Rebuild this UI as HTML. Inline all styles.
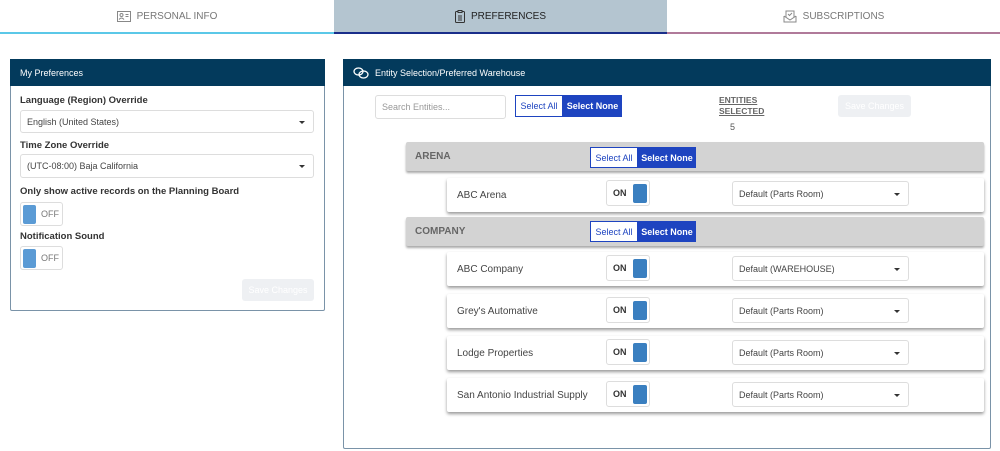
<!DOCTYPE html>
<html><head><style>
*{box-sizing:border-box;margin:0;padding:0}
body{width:1000px;height:451px;background:#fff;font-family:"Liberation Sans",sans-serif;position:relative;overflow:hidden;color:#333}
.a{position:absolute}
.tab{top:0;height:32px;font-size:10px;color:#777;display:flex;align-items:center;justify-content:center;gap:6px}
.hd{background:#033a5c;color:#fff;font-size:9px;display:flex;align-items:center;padding-left:10px}
.panel{border:1px solid #7a93a8;border-radius:2px}
.lbl{font-size:9.5px;font-weight:bold;color:#333}
.sel{border:1px solid #ddd;border-radius:3px;background:#fff;font-size:9px;color:#444;display:flex;align-items:center;padding-left:6px}
.sel:after{content:"";position:absolute;right:8px;top:50%;margin-top:-1px;border:3px solid transparent;border-top:3px solid #333;border-bottom:0}
.tog{border:1px solid #ddd;border-radius:3px;background:#fff;font-size:9px}
.sa{border:1px solid #1e44c0;background:#fff;color:#1e44c0;font-size:9px;display:flex;align-items:center;justify-content:center}
.sn{background:#1e44c0;color:#fff;font-size:9px;font-weight:bold;display:flex;align-items:center;justify-content:center}
.grp{left:406px;width:578px;background:#d3d3d3;font-size:10px;font-weight:bold;color:#666;display:flex;align-items:center;padding-left:9px;box-shadow:0 2px 2px #aaa;border-radius:2px}
.row{left:447px;width:537px;height:34px;background:#fff;box-shadow:0 2px 3px #999;border-radius:2px;font-size:10px;color:#444;display:flex;align-items:center;padding-left:10px}
.knob{position:absolute;background:#3a7fc0;border-radius:2px}
.save{background:#eef0f3;color:#fff;font-size:9px;display:flex;align-items:center;justify-content:center;border-radius:3px}
</style></head><body>
<div class="a tab" style="left:0;width:334px"><svg width="14" height="11" viewBox="0 0 14 11"><rect x=".5" y=".5" width="13" height="10" fill="none" stroke="#888"/><circle cx="4.5" cy="4" r="1.5" fill="none" stroke="#888"/><path d="M2 8.5q2.5-3 5 0M8.5 3.5h3M8.5 5.5h3" stroke="#888" fill="none"/></svg>PERSONAL INFO</div>
<div class="a tab" style="left:334px;width:333px;background:#b4c5d0;color:#222"><svg width="10" height="13" viewBox="0 0 10 13"><rect x=".5" y="1.5" width="9" height="11" rx="1" fill="none" stroke="#333"/><rect x="3" y=".5" width="4" height="2" fill="#b4c5d0" stroke="#333"/><path d="M3 6h4M3 8h4M3 10h4" stroke="#333"/></svg>PREFERENCES</div>
<div class="a tab" style="left:667px;width:333px"><svg width="14" height="13" viewBox="0 0 14 13"><path d="M1 6v6h12V6M1 6l6 4 6-4M3 7V1h8v6M5 4l1.5 1.5L9 3" stroke="#888" fill="none"/></svg>SUBSCRIPTIONS</div>
<div class="a" style="left:0;top:32px;width:334px;height:2px;background:#5bc8e8"></div>
<div class="a" style="left:334px;top:32px;width:333px;height:2px;background:#1a2e8a"></div>
<div class="a" style="left:667px;top:32px;width:333px;height:2px;background:#b07a9a"></div>

<div class="a panel" style="left:10px;top:59px;width:315px;height:252px"></div>
<div class="a hd" style="left:10px;top:59px;width:315px;height:27px">My Preferences</div>
<div class="a lbl" style="left:20px;top:95px">Language (Region) Override</div>
<div class="a sel" style="left:20px;top:110px;width:294px;height:23px">English (United States)</div>
<div class="a lbl" style="left:20px;top:140px">Time Zone Override</div>
<div class="a sel" style="left:20px;top:154px;width:294px;height:24px">(UTC-08:00) Baja California</div>
<div class="a lbl" style="left:20px;top:186px">Only show active records on the Planning Board</div>
<div class="a tog" style="left:20px;top:202px;width:43px;height:24px"><div class="knob" style="left:2px;top:2px;width:13px;height:19px;background:#5b9bd5"></div><span class="a" style="left:20px;top:6px;color:#777">OFF</span></div>
<div class="a lbl" style="left:20px;top:231px">Notification Sound</div>
<div class="a tog" style="left:20px;top:246px;width:43px;height:24px"><div class="knob" style="left:2px;top:2px;width:13px;height:19px;background:#5b9bd5"></div><span class="a" style="left:20px;top:6px;color:#777">OFF</span></div>
<div class="a save" style="left:242px;top:279px;width:72px;height:22px">Save Changes</div>

<div class="a panel" style="left:343px;top:59px;width:648px;height:390px"></div>
<div class="a hd" style="left:343px;top:59px;width:648px;height:27px"><svg width="16" height="12" viewBox="0 0 16 12" style="margin-right:6px"><ellipse cx="5.5" cy="4.5" rx="4.5" ry="3.5" fill="none" stroke="#fff" stroke-width="1.3"/><ellipse cx="10.5" cy="7.5" rx="4.5" ry="3.5" fill="none" stroke="#fff" stroke-width="1.3"/></svg>Entity Selection/Preferred Warehouse</div>
<div class="a" style="left:375px;top:95px;width:131px;height:24px;border:1px solid #ddd;border-radius:3px;font-size:9px;color:#999;padding:6px 6px">Search Entities...</div>
<div class="a sa" style="left:515px;top:95px;width:48px;height:22px">Select All</div>
<div class="a sn" style="left:563px;top:95px;width:59px;height:22px">Select None</div>
<div class="a" style="left:719px;top:95px;font-size:8.5px;font-weight:bold;color:#666;text-decoration:underline;line-height:11px">ENTITIES<br>SELECTED</div>
<div class="a" style="left:730px;top:122px;font-size:9px;color:#555">5</div>
<div class="a save" style="left:838px;top:95px;width:73px;height:22px">Save Changes</div>

<div class="a grp" style="top:142px;height:29px">ARENA</div>
<div class="a sa" style="left:590px;top:147px;width:48px;height:21px">Select All</div>
<div class="a sn" style="left:638px;top:147px;width:58px;height:21px">Select None</div>
<div class="a row" style="top:178px">ABC Arena</div>
<div class="a grp" style="top:217px;height:29px">COMPANY</div>
<div class="a sa" style="left:590px;top:221px;width:48px;height:21px">Select All</div>
<div class="a sn" style="left:638px;top:221px;width:58px;height:21px">Select None</div>
<div class="a row" style="top:252px">ABC Company</div>
<div class="a row" style="top:294px">Grey's Automative</div>
<div class="a row" style="top:336px">Lodge Properties</div>
<div class="a row" style="top:378px">San Antonio Industrial Supply</div>

<div class="a tog" style="left:606px;top:180px;width:44px;height:26px"><span class="a" style="left:6px;top:7px;font-weight:bold">ON</span><div class="knob" style="left:26px;top:3px;width:14px;height:19px"></div></div>
<div class="a sel" style="left:732px;top:181px;width:177px;height:25px">Default (Parts Room)</div>
<div class="a tog" style="left:606px;top:255px;width:44px;height:26px"><span class="a" style="left:6px;top:7px;font-weight:bold">ON</span><div class="knob" style="left:26px;top:3px;width:14px;height:19px"></div></div>
<div class="a sel" style="left:732px;top:256px;width:177px;height:25px">Default (WAREHOUSE)</div>
<div class="a tog" style="left:606px;top:297px;width:44px;height:26px"><span class="a" style="left:6px;top:7px;font-weight:bold">ON</span><div class="knob" style="left:26px;top:3px;width:14px;height:19px"></div></div>
<div class="a sel" style="left:732px;top:298px;width:177px;height:25px">Default (Parts Room)</div>
<div class="a tog" style="left:606px;top:339px;width:44px;height:26px"><span class="a" style="left:6px;top:7px;font-weight:bold">ON</span><div class="knob" style="left:26px;top:3px;width:14px;height:19px"></div></div>
<div class="a sel" style="left:732px;top:340px;width:177px;height:25px">Default (Parts Room)</div>
<div class="a tog" style="left:606px;top:381px;width:44px;height:26px"><span class="a" style="left:6px;top:7px;font-weight:bold">ON</span><div class="knob" style="left:26px;top:3px;width:14px;height:19px"></div></div>
<div class="a sel" style="left:732px;top:382px;width:177px;height:25px">Default (Parts Room)</div>
</body></html>
